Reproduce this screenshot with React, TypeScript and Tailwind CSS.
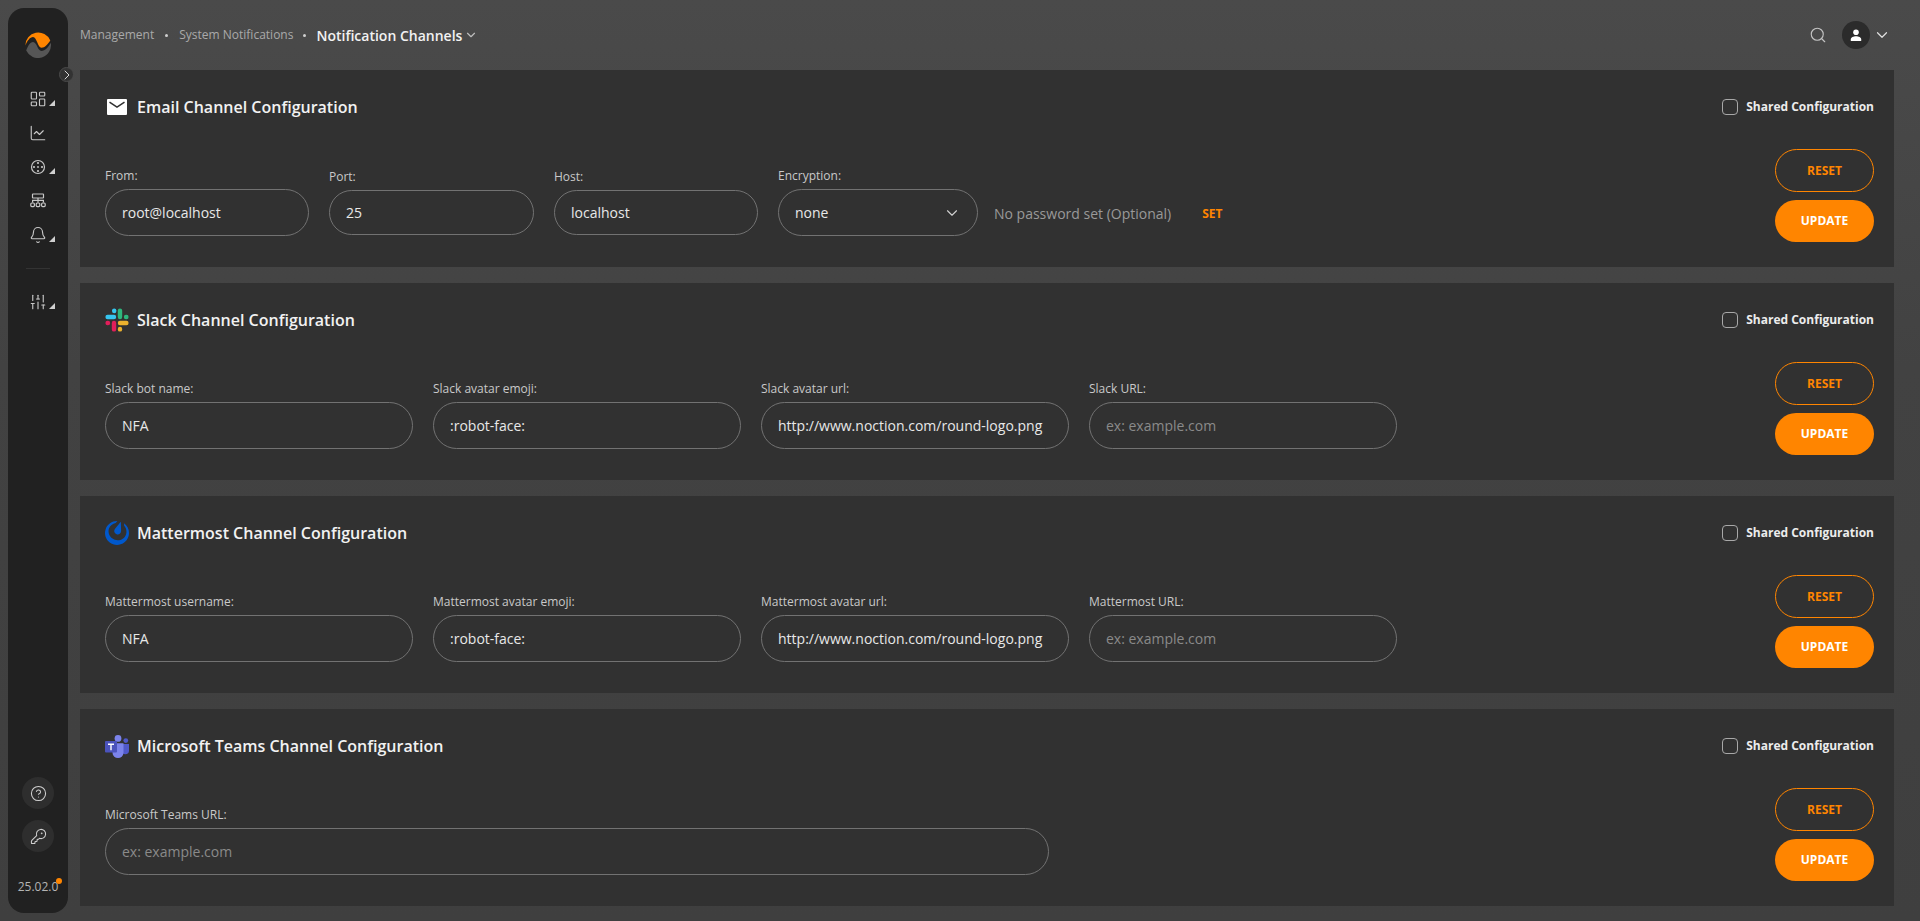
import { Bell, ChartLine, ChevronDown, ChevronRight, CircleHelp, KeyRound, LayoutDashboard, Search, SlidersVertical } from "lucide-react"
import type { ReactNode } from "react"
import { SiMattermost } from "react-icons/si"

function Logo() {
  return (
    <svg width="26" height="26" viewBox="0 0 26 26">
      <path d="M1.2 18.5C3 14 5 10 8 10C12 10 12.500 19 16.500 19C20 19 23.500 15 25.800 10.800A13 13 0 0 1 1.200 18.500Z" fill="#565656" />
      <path d="M.3 13.500A13 13 0 0 1 25.300 8.500C22.500 12.500 20 15.700 16.500 15.700C12.500 15.700 12 5 8 5C5 5 2.500 8.500 .3 13.500Z" fill="#ff8500" />
    </svg>
  )
}

function WheelIcon() {
  return (
    <svg width="16" height="16" viewBox="0 0 16 16" fill="none" stroke="#c8c8c8" strokeWidth="1.2">
      <circle cx="8" cy="8" r="6.500" />
      <g fill="#c8c8c8" stroke="none">
        <circle cx="8" cy="8" r=".9" />
        <circle cx="8" cy="4" r="1.100" />
        <circle cx="8" cy="12" r="1.100" />
        <circle cx="4" cy="8" r="1.100" />
        <circle cx="12" cy="8" r="1.100" />
      </g>
    </svg>
  )
}

function TreeIcon() {
  return (
    <svg width="16" height="16" viewBox="0 0 16 16" fill="none" stroke="#c8c8c8" strokeWidth="1.2">
      <rect x="2.500" y="1" width="11" height="4" rx=".5" />
      <path d="M8 5v4.500M2.600 9.500V7.300h10.800v2.200" />
      <rect x=".8" y="10" width="3.600" height="3.600" rx="1" />
      <rect x="6.200" y="10" width="3.600" height="3.600" rx="1" />
      <rect x="11.600" y="10" width="3.600" height="3.600" rx="1" />
    </svg>
  )
}

function MailIcon() {
  return (
    <svg width="20" height="16" viewBox="0 0 20 16">
      <rect width="20" height="16" rx="1" fill="#fff" />
      <path d="M2.500 3.200L10 8.200L17.500 3.200" fill="none" stroke="#313131" strokeWidth="1.500" />
    </svg>
  )
}

function SlackIcon() {
  return (
    <svg width="24" height="24" viewBox="0 0 24 24" fill="none" strokeWidth="4.400" strokeLinecap="round">
      <path d="M2.600 9H9M9.200 2.600V3" stroke="#36c5f0" />
      <path d="M15 2.600V9M21.400 9H21" stroke="#2eb67d" />
      <path d="M15 15H21.400M15 21.400V21" stroke="#ecb22e" />
      <path d="M9 15V21.400M2.600 15H3" stroke="#e01e5a" />
    </svg>
  )
}

function TeamsIcon() {
  return (
    <svg width="24" height="23" viewBox="0 0 24 23">
      <circle cx="20.800" cy="5.600" r="2.400" fill="#5059c9" />
      <path d="M16.500 9h7.500v6.500a3.700 3.700 0 0 1-7.500 0Z" fill="#5059c9" />
      <circle cx="13" cy="3.400" r="3.400" fill="#7b83eb" />
      <path d="M7.500 8.200h11v9.300a5.500 5.500 0 0 1-11 0Z" fill="#7b83eb" />
      <rect y="6" width="12" height="11.500" rx="1" fill="#4b53bc" />
      <path d="M3 8.600h6v1.300H6.700v5.300H5.300V9.900H3Z" fill="#fff" />
    </svg>
  )
}

function Field({ label, value, placeholder, w, tight }: { label: string; value?: string; placeholder?: string; w: string; tight?: boolean }) {
  return (
    <div className={w}>
      <label className={tight ? "mb-[4px] mt-[1px] block text-[12px] leading-[18px] text-[#c9c9c9]" : "mb-[4px] block text-[12px] leading-[18px] text-[#c9c9c9]"}>{label}</label>
      <input
        readOnly
        value={value ?? ""}
        placeholder={placeholder}
        className={
          (tight ? "h-[45px] " : "h-[47px] ") +
          "w-full rounded-full border border-[#727272] bg-transparent px-[16px] text-[14px] text-[#e8e8e8] outline-none placeholder:text-[#8a8a8a]"
        }
      />
    </div>
  )
}

function ChannelCard({ icon, title, children }: { icon: ReactNode; title: string; children: ReactNode }) {
  return (
    <section className="h-[197px] bg-[#313131] pl-[25px] pr-[20px]">
      <div className="flex h-[74px] items-center justify-between">
        <div className="flex items-center">
          <div className="flex w-[32px] items-center">{icon}</div>
          <h2 className="text-[16px] font-semibold text-[#f2f2f2]">{title}</h2>
        </div>
        <label className="flex items-center gap-[8px] text-[12px] font-bold text-[#ececec]">
          <span className="h-[16px] w-[16px] rounded-[4px] border border-[#a8a8a8]" />
          Shared Configuration
        </label>
      </div>
      <div className="flex justify-between">
        <div className="flex items-start gap-[20px] pt-[23px]">{children}</div>
        <div className="flex w-[99px] flex-col gap-[8px] pt-[5px]">
          <button className="h-[43px] rounded-full border border-[#ff8500] text-[12px] font-bold text-[#ff8500]">RESET</button>
          <button className="h-[42px] rounded-full bg-[#ff8500] text-[12px] font-bold text-white">UPDATE</button>
        </div>
      </div>
    </section>
  )
}

function NavItem({ children, arrow }: { children: ReactNode; arrow?: boolean }) {
  return (
    <div className="relative flex h-[34px] items-center justify-center">
      {children}
      {arrow && <span className="absolute left-[41px] top-[18px] h-0 w-0 border-b-[6px] border-l-[6px] border-b-[#d0d0d0] border-l-transparent" />}
    </div>
  )
}

export default function App() {
  return (
    <div className="flex h-[921px] overflow-hidden bg-[linear-gradient(180deg,#4a4a4a_0%,#424242_40%,#3f3f3f_100%)] font-['Open_Sans',sans-serif]">
      <aside className="relative m-[8px] flex w-[60px] shrink-0 flex-col rounded-[16px] bg-[#212121]">
        <div className="flex justify-center pt-[24px]">
          <Logo />
        </div>
        <div className="absolute left-[51px] top-[59px] flex h-[15px] w-[15px] items-center justify-center rounded-full border border-[#4a4a4a] bg-[#333]">
          <ChevronRight size={16} color="#d8d8d8" strokeWidth={1.5} className="shrink-0" />
        </div>
        <nav className="mt-[24px] flex flex-col">
          <NavItem arrow><LayoutDashboard size={18} color="#c8c8c8" strokeWidth={1.5} /></NavItem>
          <NavItem><ChartLine size={18} color="#c8c8c8" strokeWidth={1.5} /></NavItem>
          <NavItem arrow><WheelIcon /></NavItem>
          <NavItem><TreeIcon /></NavItem>
          <NavItem arrow><Bell size={18} color="#c8c8c8" strokeWidth={1.5} /></NavItem>
          <div className="mx-[18px] my-[16px] h-px bg-[#333]" />
          <NavItem arrow><SlidersVertical size={18} color="#c8c8c8" strokeWidth={1.5} /></NavItem>
        </nav>
        <div className="mt-auto flex flex-col items-center gap-[11px] pb-[17px]">
          <div className="flex h-[32px] w-[32px] items-center justify-center rounded-full bg-[#2e2e2e]">
            <CircleHelp size={17} color="#d0d0d0" strokeWidth={1.5} />
          </div>
          <div className="flex h-[32px] w-[32px] items-center justify-center rounded-full bg-[#2e2e2e]">
            <KeyRound size={17} color="#d0d0d0" strokeWidth={1.5} />
          </div>
          <div className="relative mt-[15px] text-[12px] leading-[18px] text-[#b4b4b4]">
            25.02.0
            <span className="absolute right-[-4px] top-0 h-[6px] w-[6px] rounded-full bg-[#ff8500]" />
          </div>
        </div>
      </aside>
      <main className="min-w-0 flex-1 pl-[4px] pr-[26px]">
        <header className="flex h-[70px] items-center justify-between">
          <div className="flex items-center text-[12px] text-[#a9a9a9]">
            <span>Management</span>
            <span className="mx-[11px] h-[3px] w-[3px] rounded-full bg-[#cfcfcf]" />
            <span>System Notifications</span>
            <span className="mx-[10px] h-[3px] w-[3px] rounded-full bg-[#cfcfcf]" />
            <span className="text-[14px] font-semibold text-[#f2f2f2]">Notification Channels</span>
            <ChevronDown size={14} color="#bdbdbd" className="ml-[2px]" />
          </div>
          <div className="flex items-center">
            <Search size={18} color="#c4c4c4" strokeWidth={1.5} />
            <div className="ml-[15px] flex h-[28px] w-[28px] items-center justify-center rounded-full bg-[#2b2b2b]">
              <svg width="12" height="12" viewBox="0 0 12 12" fill="#fff">
                <circle cx="6" cy="3.200" r="2.800" />
                <path d="M.8 12V10.200C.8 8.200 3.500 7.200 6 7.200S11.200 8.200 11.200 10.200V12Z" />
              </svg>
            </div>
            <ChevronDown size={18} color="#e0e0e0" strokeWidth={1.6} className="ml-[3px] mr-[3px]" />
          </div>
        </header>
        <div className="flex flex-col gap-[16px]">
          <ChannelCard icon={<div className="pl-[2px]"><MailIcon /></div>} title="Email Channel Configuration">
            <Field label="From:" value="root@localhost" w="w-[204px]" />
            <Field label="Port:" value="25" w="w-[205px]" tight />
            <Field label="Host:" value="localhost" w="w-[204px]" tight />
            <div className="w-[200px]">
              <label className="mb-[4px] block text-[12px] leading-[18px] text-[#c9c9c9]">Encryption:</label>
              <div className="flex h-[47px] items-center justify-between rounded-full border border-[#727272] pl-[16px] pr-[16px] text-[14px] text-[#e8e8e8]">
                none
                <ChevronDown size={18} color="#d0d0d0" strokeWidth={1.5} />
              </div>
            </div>
            <div className="ml-[-4px] mt-[23px] flex h-[47px] items-center text-[14px] text-[#999]">
              No password set (Optional)
              <span className="ml-[31px] text-[12px] font-bold text-[#ff8500]">SET</span>
            </div>
          </ChannelCard>
          <ChannelCard icon={<SlackIcon />} title="Slack Channel Configuration">
            <Field label="Slack bot name:" value="NFA" w="w-[308px]" />
            <Field label="Slack avatar emoji:" value=":robot-face:" w="w-[308px]" />
            <Field label="Slack avatar url:" value="http://www.noction.com/round-logo.png" w="w-[308px]" />
            <Field label="Slack URL:" placeholder="ex: example.com" w="w-[308px]" />
          </ChannelCard>
          <ChannelCard icon={<SiMattermost size={24} color="#0058cc" />} title="Mattermost Channel Configuration">
            <Field label="Mattermost username:" value="NFA" w="w-[308px]" />
            <Field label="Mattermost avatar emoji:" value=":robot-face:" w="w-[308px]" />
            <Field label="Mattermost avatar url:" value="http://www.noction.com/round-logo.png" w="w-[308px]" />
            <Field label="Mattermost URL:" placeholder="ex: example.com" w="w-[308px]" />
          </ChannelCard>
          <ChannelCard icon={<TeamsIcon />} title="Microsoft Teams Channel Configuration">
            <Field label="Microsoft Teams URL:" placeholder="ex: example.com" w="w-[944px]" />
          </ChannelCard>
        </div>
      </main>
    </div>
  )
}
